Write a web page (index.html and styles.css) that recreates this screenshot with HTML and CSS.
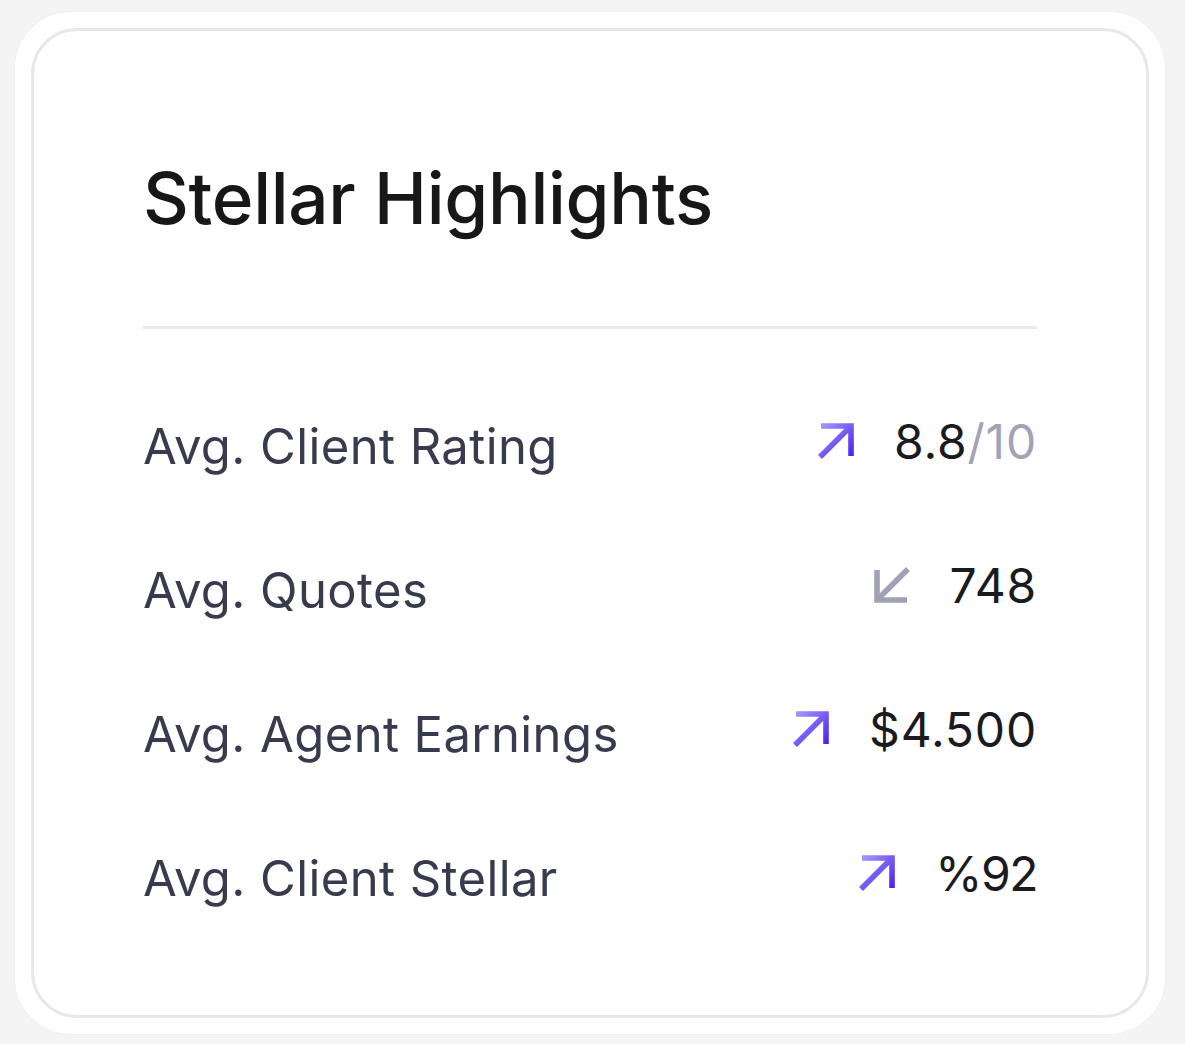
FILE: index.html
```html
<!DOCTYPE html>
<html lang="en">
<head>
    <meta charset="UTF-8">
    <meta name="viewport" content="width=device-width, initial-scale=1.0">
    <title>Stellar Highlights</title>
    <link rel="stylesheet" href="styles.css">
</head>
<body>

    <svg width="0" height="0" class="defs">
        <defs>
            <linearGradient id="upGrad" x1="0" y1="0" x2="1" y2="1">
                <stop offset="0" stop-color="#a497f7"/>
                <stop offset="1" stop-color="#4a22f0"/>
            </linearGradient>
        </defs>
    </svg>

    <div class="frame">
        <div class="card">
            <h2>Stellar Highlights</h2>
            <hr class="divider">

            <div class="stat">
                <span class="label">Avg. Client Rating</span>
                <div class="value">
                    <svg class="arrow" viewBox="0 0 36 36"><path d="M2 34L33 3M3 3H33V33" stroke="url(#upGrad)"/></svg>
                    <span class="num">8.8<span class="muted">/10</span></span>
                </div>
            </div>

            <div class="stat">
                <span class="label">Avg. Quotes</span>
                <div class="value">
                    <svg class="arrow" viewBox="0 0 36 36"><path d="M34 2L3 33M3 3V33H33" stroke="#9fa2b6"/></svg>
                    <span class="num">748</span>
                </div>
            </div>

            <div class="stat">
                <span class="label">Avg. Agent Earnings</span>
                <div class="value">
                    <svg class="arrow" viewBox="0 0 36 36"><path d="M2 34L33 3M3 3H33V33" stroke="url(#upGrad)"/></svg>
                    <span class="num">$4.500</span>
                </div>
            </div>

            <div class="stat">
                <span class="label">Avg. Client Stellar</span>
                <div class="value">
                    <svg class="arrow" viewBox="0 0 36 36"><path d="M2 34L33 3M3 3H33V33" stroke="url(#upGrad)"/></svg>
                    <span class="num pct">%92</span>
                </div>
            </div>
        </div>
    </div>

</body>
</html>
```

FILE: styles.css
```css
* {
    margin: 0;
    padding: 0;
    box-sizing: border-box;
    font-family: Inter, "Noto Sans", sans-serif;
}

body {
    background: #f4f4f5;
    padding: 12px 20px 9px 15px;
}

.defs {
    position: absolute;
}

.frame {
    background: #ffffff;
    border-radius: 56px;
    padding: 16px;
    box-shadow: 0 0 0 1px #f0f0f1;
}

.card {
    background: #ffffff;
    border: 3px solid #e7e8ea;
    border-radius: 46px;
    padding: 132px 109px 0 109px;
    height: 990px;
}

h2 {
    font-size: 71px;
    font-weight: 500;
    color: #171717;
    letter-spacing: -0.3px;
    line-height: 1;
}

.divider {
    border: none;
    height: 3px;
    background: #e8e9ec;
    margin: 92px 0 45px;
}

.stat {
    display: flex;
    justify-content: space-between;
    align-items: center;
    height: 144px;
}

.label {
    font-size: 49px;
    color: #383a4e;
    letter-spacing: 0.4px;
}

.value {
    display: flex;
    align-items: center;
    gap: 40px;
    margin-bottom: 10px;
}

.arrow {
    width: 36px;
    height: 36px;
    fill: none;
    stroke-width: 5.6;
    stroke-linejoin: miter;
}

.num {
    font-size: 48px;
    color: #1b1b1f;
    letter-spacing: 0.8px;
}

.pct {
    letter-spacing: -1.5px;
}

.muted {
    color: #a2a4b4;
}
```
